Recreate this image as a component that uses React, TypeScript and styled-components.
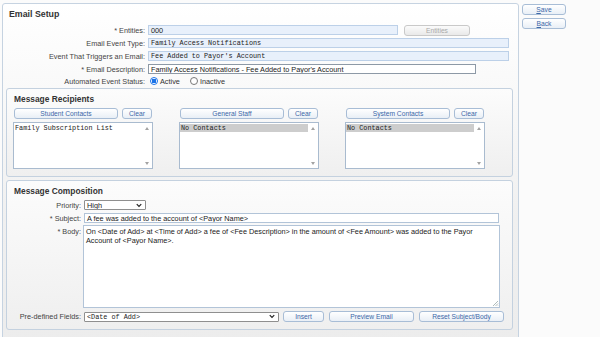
import styled, { createGlobalStyle } from "styled-components";

const GlobalStyle = createGlobalStyle`
  html, body {
    margin: 0;
    padding: 0;
    background: #fbfbfb;
    font-family: "Liberation Sans", Arial, sans-serif;
    color: #333;
  }
`;

const recipientGroups = [
  { title: "Student Contacts", items: ["Family Subscription List"], selected: false },
  { title: "General Staff", items: ["No Contacts"], selected: true },
  { title: "System Contacts", items: ["No Contacts"], selected: true },
];

const App = () => {
  return (
    <>
      <GlobalStyle />
      <Page>
        <MainPanel>
          <PanelTitle>Email Setup</PanelTitle>
          <SetupGrid>
            <Label>* Entities:</Label>
            <Row>
              <ReadOnlyInput $width={250}>000</ReadOnlyInput>
              <Button $width={66} $gap={6} $disabled>
                Entities
              </Button>
            </Row>
            <Label>Email Event Type:</Label>
            <ReadOnlyInput $width={361} $mono>
              Family Access Notifications
            </ReadOnlyInput>
            <Label>Event That Triggers an Email:</Label>
            <ReadOnlyInput $width={361} $mono>
              Fee Added to Payor's Account
            </ReadOnlyInput>
            <Label>* Email Description:</Label>
            <TextInput $width={328} $dark>
              Family Access Notifications - Fee Added to Payor's Account
            </TextInput>
            <Label>Automated Event Status:</Label>
            <Row>
              <Radio $checked />
              <RadioText>Active</RadioText>
              <Radio />
              <RadioText>Inactive</RadioText>
            </Row>
          </SetupGrid>

          <Section>
            <SectionTitle>Message Recipients</SectionTitle>
            <RecipientColumns>
              {recipientGroups.map((g) => (
                <RecipientColumn key={g.title}>
                  <Row>
                    <Button $width={104}>{g.title}</Button>
                    <Button $width={30}>Clear</Button>
                  </Row>
                  <ListBox>
                    <ListItems>
                      {g.items.map((item) => (
                        <ListItem key={item} $selected={g.selected}>
                          {item}
                        </ListItem>
                      ))}
                    </ListItems>
                    <ScrollBar>
                      <Arrow $up />
                      <Arrow />
                    </ScrollBar>
                  </ListBox>
                </RecipientColumn>
              ))}
            </RecipientColumns>
          </Section>

          <Section>
            <SectionTitle>Message Composition</SectionTitle>
            <ComposeGrid>
              <Label>Priority:</Label>
              <SelectBox $width={62}>
                <span>High</span>
                <Chevron />
              </SelectBox>
              <Label>* Subject:</Label>
              <TextInput $width={415}>A fee was added to the account of &lt;Payor Name&gt;</TextInput>
              <BodyLabel>* Body:</BodyLabel>
              <BodyArea>
                On &lt;Date of Add&gt; at &lt;Time of Add&gt; a fee of &lt;Fee Description&gt; in the amount of &lt;Fee
                Amount&gt; was added to the Payor Account of &lt;Payor Name&gt;.
                <Grip viewBox="0 0 8 8">
                  <path d="M7 2L2 7M7 4.5L4.5 7M7 6.5L6.5 7" stroke="#9aa" strokeWidth="0.8" />
                </Grip>
              </BodyArea>
              <Label>Pre-defined Fields:</Label>
              <Row>
                <SelectBox $width={195} $mono>
                  <span>&lt;Date of Add&gt;</span>
                  <Chevron />
                </SelectBox>
                <Button $width={41}>Insert</Button>
                <Button $width={85} $gap={5}>
                  Preview Email
                </Button>
                <Button $width={85} $gap={5}>
                  Reset Subject/Body
                </Button>
              </Row>
            </ComposeGrid>
          </Section>
        </MainPanel>

        <SideBar>
          <Button $width={44}>
            <u>S</u>ave
          </Button>
          <Button $width={44}>
            <u>B</u>ack
          </Button>
        </SideBar>
      </Page>
    </>
  );
};

const Chevron = () => (
  <ChevronSvg viewBox="0 0 8 6">
    <path d="M1 1.2L4 4.2L7 1.2" fill="none" stroke="#222" strokeWidth="1.6" />
  </ChevronSvg>
);

const Page = styled.div`
  display: flex;
  align-items: flex-start;
  padding: 3px 0 0 2px;
  height: 334px;
  overflow: hidden;
`;

const MainPanel = styled.div`
  width: 517px;
  height: 360px;
  flex-shrink: 0;
  border: 1px solid #c6d3e1;
  border-radius: 3px;
  background: linear-gradient(#ffffff, #f0f0f0 60%, #ececec);
  padding: 0 5px 0 3px;
  box-sizing: border-box;
  display: flex;
  flex-direction: column;
`;

const PanelTitle = styled.div`
  font-size: 8.8px;
  font-weight: bold;
  color: #333;
  padding: 5px 0 0 3px;
  height: 16px;
  box-sizing: border-box;
`;

const SetupGrid = styled.div`
  display: grid;
  grid-template-columns: 139px 1fr;
  column-gap: 3px;
  grid-template-rows: 10px 10px 10px 10px 8px;
  row-gap: 3px;
  align-items: center;
  padding-top: 5px;
  margin-bottom: 3px;
`;

const Label = styled.div`
  font-size: 7.3px;
  color: #444;
  text-align: right;
  white-space: nowrap;
`;

const BodyLabel = styled(Label)`
  align-self: start;
  padding-top: 1px;
`;

const Row = styled.div`
  display: flex;
  align-items: center;
  gap: 4px;
`;

const Field = styled.div<{ $width: number; $mono?: boolean }>`
  width: ${(p) => p.$width}px;
  height: 10px;
  box-sizing: border-box;
  padding: 0 2px;
  display: flex;
  align-items: center;
  white-space: nowrap;
  overflow: hidden;
  font-family: ${(p) => (p.$mono ? '"Liberation Mono", monospace' : '"Liberation Sans", Arial, sans-serif')};
  font-size: ${(p) => (p.$mono ? "6.8px" : "7.3px")};
  color: #222;
`;

const ReadOnlyInput = styled(Field)`
  background: #e8f0fb;
  border: 1px solid #bcd0e8;
`;

const TextInput = styled(Field)<{ $dark?: boolean }>`
  background: #fff;
  border: 1px solid ${(p) => (p.$dark ? "#8d99a6" : "#b2c4d8")};
`;

const SelectBox = styled(Field)`
  background: #fff;
  border: 1px solid #8f8f8f;
  border-radius: 1px;
  justify-content: space-between;
`;

const ChevronSvg = styled.svg`
  width: 6px;
  height: 5px;
  flex-shrink: 0;
  margin-right: 1px;
`;

const Button = styled.div<{ $width: number; $disabled?: boolean; $gap?: number }>`
  width: ${(p) => p.$width}px;
  height: 11px;
  box-sizing: border-box;
  margin-left: ${(p) => (p.$gap ? p.$gap - 4 : 0)}px;
  display: flex;
  align-items: center;
  justify-content: center;
  font-size: 6.7px;
  color: ${(p) => (p.$disabled ? "#a9a9a9" : "#3c68a8")};
  background: ${(p) =>
    p.$disabled ? "linear-gradient(#fbfbfb, #e9e9e9)" : "linear-gradient(#ffffff, #e9eff6)"};
  border: 1px solid ${(p) => (p.$disabled ? "#c9c9c9" : "#a8bdd6")};
  border-radius: 3px;
  white-space: nowrap;
  flex-shrink: 0;
  u {
    text-decoration: underline;
  }
`;

const Radio = styled.span<{ $checked?: boolean }>`
  width: 8px;
  height: 8px;
  box-sizing: border-box;
  border-radius: 50%;
  border: 1px solid ${(p) => (p.$checked ? "#1a73e8" : "#777")};
  background: ${(p) => (p.$checked ? "radial-gradient(circle, #1a73e8 0 2.2px, #fff 2.4px)" : "#fff")};
  margin-left: 2px;
  margin-right: -2px;
`;

const RadioText = styled.span`
  font-size: 7.3px;
  color: #333;
  margin-right: 4px;
`;

const Section = styled.div`
  margin: 0 0 3px 0;
  width: 507px;
  box-sizing: border-box;
  border: 1px solid #c4d1df;
  border-radius: 3px;
  background: linear-gradient(#fcfcfc, #efefef);
  padding: 5px 6px 7px 6px;
`;

const SectionTitle = styled.div`
  font-size: 8.4px;
  font-weight: bold;
  color: #333;
  height: 10px;
  line-height: 10px;
  padding-left: 1px;
  margin-bottom: 4px;
`;

const RecipientColumns = styled.div`
  display: flex;
  gap: 26px;
`;

const RecipientColumn = styled.div`
  width: 139px;
  display: flex;
  flex-direction: column;
  gap: 3px;
  padding-left: 1px;
`;

const ListBox = styled.div`
  margin-left: -1px;
  width: 140px;
  height: 47px;
  box-sizing: border-box;
  background: #fff;
  border: 1px solid #a9bbcf;
  display: flex;
`;

const ListItems = styled.div`
  flex: 1;
  padding-top: 1px;
`;

const ListItem = styled.div<{ $selected?: boolean }>`
  font-family: "Liberation Mono", monospace;
  font-size: 6.8px;
  line-height: 8px;
  padding-left: 1px;
  color: #222;
  background: ${(p) => (p.$selected ? "#cdcdcd" : "transparent")};
`;

const ScrollBar = styled.div`
  width: 10px;
  display: flex;
  flex-direction: column;
  justify-content: space-between;
  align-items: center;
  padding: 4px 0 3px;
`;

const Arrow = styled.span<{ $up?: boolean }>`
  width: 0;
  height: 0;
  border-left: 2.5px solid transparent;
  border-right: 2.5px solid transparent;
  ${(p) => (p.$up ? "border-bottom: 3px solid #a3a3a3;" : "border-top: 3px solid #a3a3a3;")}
`;

const ComposeGrid = styled.div`
  display: grid;
  grid-template-columns: 68px 1fr;
  column-gap: 3px;
  grid-template-rows: 10px 10px 82px 11px;
  row-gap: 3px;
  align-items: center;
`;

const BodyArea = styled.div`
  position: relative;
  width: 417px;
  height: 83px;
  margin-left: -1px;
  margin-top: -1px;
  box-sizing: border-box;
  background: #fff;
  border: 1px solid #b2c4d8;
  padding: 1px 2px;
  font-size: 7.3px;
  line-height: 9px;
  color: #222;
  align-self: start;
`;

const Grip = styled.svg`
  position: absolute;
  right: 0;
  bottom: 0;
  width: 8px;
  height: 8px;
`;

const SideBar = styled.div`
  display: flex;
  flex-direction: column;
  gap: 3px;
  padding: 1px 0 0 3px;
`;

export default App;
